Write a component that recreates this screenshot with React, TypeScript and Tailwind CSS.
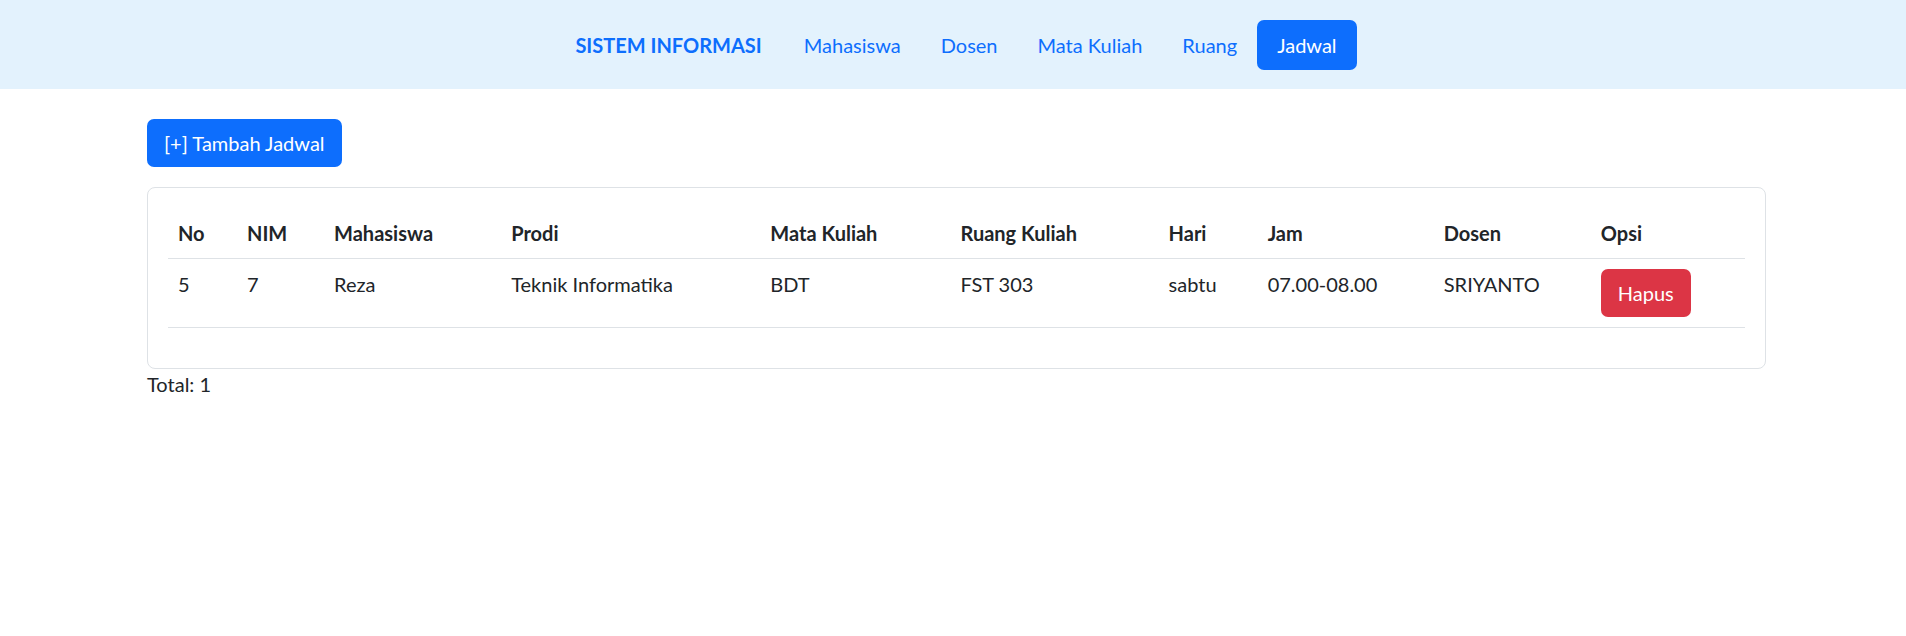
const NAV = ['Mahasiswa', 'Dosen', 'Mata Kuliah', 'Ruang']

const COLS = [
  { label: 'No', w: 'w-[69px]' },
  { label: 'NIM', w: 'w-[87px]' },
  { label: 'Mahasiswa', w: 'w-[177px]' },
  { label: 'Prodi', w: 'w-[259px]' },
  { label: 'Mata Kuliah', w: 'w-[190px]' },
  { label: 'Ruang Kuliah', w: 'w-[208px]' },
  { label: 'Hari', w: 'w-[99px]' },
  { label: 'Jam', w: 'w-[176px]' },
  { label: 'Dosen', w: 'w-[157px]' },
  { label: 'Opsi', w: 'w-[154px]' },
]

const ROWS = [
  ['5', '7', 'Reza', 'Teknik Informatika', 'BDT', 'FST 303', 'sabtu', '07.00-08.00', 'SRIYANTO'],
]

export default function App() {
  return (
    <div className="min-h-[636px] bg-white font-['Lato','Noto_Sans',sans-serif] text-[20px] leading-[30px] text-[#212529]">
      <nav className="flex h-[89px] items-center justify-center bg-[#e3f2fd]">
        <div className="flex items-center pl-[26px]">
          <span className="mr-[22px] font-bold text-[#0d6efd]">SISTEM INFORMASI</span>
          {NAV.map((n) => (
            <a key={n} className="px-[20px] py-[10px] text-[#0d6efd]">
              {n}
            </a>
          ))}
          <a className="rounded-[7px] bg-[#0d6efd] px-[20px] py-[10px] text-white">Jadwal</a>
        </div>
      </nav>

      <main className="pl-[147px] pt-[30px]">
        <button className="h-[48px] rounded-[7px] bg-[#0d6efd] px-[17px] text-white">[+] Tambah Jadwal</button>

        <div className="mt-[20px] w-[1619px] rounded-[8px] border border-[#dee2e6] px-[20px] pt-[20px] pb-[40px]">
          <table className="w-full border-collapse text-left">
            <thead>
              <tr className="border-b border-[#dee2e6]">
                {COLS.map((c) => (
                  <th key={c.label} className={`${c.w} px-[10px] py-[10px] align-top font-bold`}>
                    {c.label}
                  </th>
                ))}
              </tr>
            </thead>
            <tbody>
              {ROWS.map((r) => (
                <tr key={r[0]} className="border-b border-[#dee2e6]">
                  {r.map((v, i) => (
                    <td key={i} className="px-[10px] py-[10px] align-top">
                      {v}
                    </td>
                  ))}
                  <td className="px-[10px] py-[10px] align-top">
                    <button className="h-[48px] rounded-[7px] bg-[#dc3545] px-[17px] text-white">Hapus</button>
                  </td>
                </tr>
              ))}
            </tbody>
          </table>
        </div>
        <div>Total: 1</div>
      </main>
    </div>
  )
}
